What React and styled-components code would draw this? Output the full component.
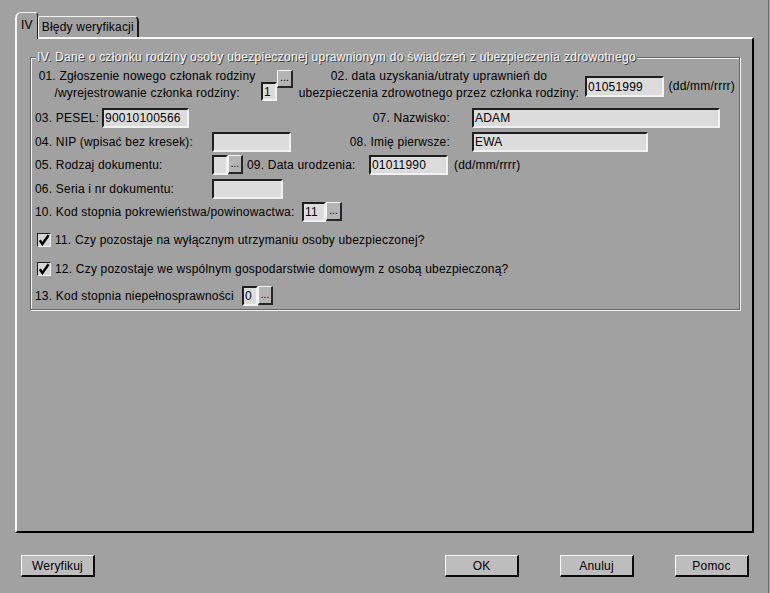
import React from 'react';
import styled, { createGlobalStyle } from 'styled-components';

const GlobalStyle = createGlobalStyle`
  html, body { margin: 0; padding: 0; background: #a1a1a1; }
  body {
    font-family: "Liberation Sans", Arial, Helvetica, sans-serif;
    font-size: 12px;
    color: #000;
  }
  * { box-sizing: border-box; }
`;

const Window = styled.div`
  width: 769px;
  height: 593px;
  background: #a1a1a1;
  border-right: 1px solid #6c6c6c;
  display: flex;
  flex-direction: column;
  letter-spacing: 0.2px;
  overflow: hidden;
`;

const TabBar = styled.div`
  display: flex;
  align-items: flex-end;
  height: 25px;
  margin-top: 12px;
  padding-left: 15px;
  position: relative;
  z-index: 1;
`;

const Tab = styled.div`
  display: flex;
  align-items: center;
  background: #a1a1a1;
  white-space: nowrap;
  height: ${p => (p.$active ? '27px' : '21px')};
  margin-bottom: ${p => (p.$active ? '-2px' : '0')};
  padding: ${p => (p.$active ? '0 4px 3px 4px' : '0 3px 0 3px')};
  border-style: solid;
  border-color: #f4f4f4 #1c1c1c transparent #f4f4f4;
  border-width: ${p => (p.$active ? '1px 1px 0 2px' : '1px 2px 0 1px')};
  border-radius: ${p => (p.$active ? '6px 3px 0 0' : '2px 5px 0 0')};
`;

const Panel = styled.div`
  margin-left: 15px;
  width: 739px;
  height: 496px;
  border-style: solid;
  border-width: 2px;
  border-color: #f8f8f8 #000 #000 #f8f8f8;
  padding: 12px 12px 0 13px;
`;

const Group = styled.fieldset`
  margin: 0;
  padding: 4px 4px 3px 4px;
  border: 1px solid #686868;
  box-shadow: inset 1px 1px 0 #f2f2f2, 1px 1px 0 #f2f2f2;
  min-width: 0;
  display: flex;
  flex-direction: column;
`;

const Legend = styled.legend`
  padding: 0 1px;
  margin-left: 1px;
  background: #a1a1a1;
  color: #f8f8f8;
  text-shadow: 1px 1px 0 #3c3c3c;
  letter-spacing: 0.3px;
  line-height: 13px;
  white-space: nowrap;
`;

const Row = styled.div`
  display: flex;
  align-items: ${p => p.$top ? 'flex-start' : 'center'};
  height: ${p => p.$h || 20}px;
  margin-top: ${p => p.$mt || 0}px;
  white-space: nowrap;
`;

const GridRow = styled.div`
  display: grid;
  grid-template-columns: 293px 100px 1fr;
  column-gap: 22px;
  align-items: center;
  height: 20px;
  margin-top: ${p => p.$mt || 0}px;
  white-space: nowrap;
`;

const Cell = styled.div`
  display: flex;
  align-items: center;
  justify-self: ${p => p.$end ? 'end' : 'start'};
`;

const CenterLabel = styled.div`
  width: ${p => p.$w}px;
  margin-left: ${p => p.$ml || 0}px;
  text-align: center;
  line-height: 17px;
`;

const Label = styled.span`
  display: inline-block;
  width: ${p => (p.$w ? `${p.$w}px` : 'auto')};
  margin-left: ${p => p.$ml || 0}px;
  margin-right: ${p => p.$mr || 0}px;
  margin-top: ${p => p.$mt || 0}px;
  line-height: 14px;
`;

const Field = styled.div`
  width: ${p => p.$w}px;
  height: ${p => p.$h || 20}px;
  margin-top: ${p => p.$mt || 0}px;
  margin-left: ${p => p.$ml || 0}px;
  background: #dcdcdc;
  border-style: solid;
  border-width: 2px;
  border-color: #1e1e1e #f2f2f2 #f2f2f2 #1e1e1e;
  padding: 0 0 0 1px;
  display: flex;
  align-items: center;
  line-height: 14px;
  overflow: hidden;
`;

const DotButton = styled.div`
  width: ${p => p.$w || 15}px;
  height: ${p => p.$h || 19}px;
  margin-top: ${p => p.$mt || 0}px;
  align-self: ${p => p.$self || 'auto'};
  background: #b4b4b4;
  border-style: solid;
  border-width: 1px 2px 2px 1px;
  border-color: #f6f6f6 #262626 #262626 #f6f6f6;
  display: flex;
  align-items: center;
  justify-content: center;
  font-size: 10px;
  letter-spacing: 0;
  padding-bottom: 2px;
`;

const CheckBox = styled.div`
  width: 14px;
  height: 14px;
  margin-left: 2px;
  margin-right: 4px;
  background: #d6d6d6;
  border-style: solid;
  border-width: 1px;
  border-color: #1e1e1e #f2f2f2 #f2f2f2 #1e1e1e;
  display: flex;
  align-items: center;
  justify-content: center;
`;

const Footer = styled.div`
  display: flex;
  align-items: center;
  margin-top: 22px;
  padding: 0 19px 0 21px;
`;

const Spacer = styled.div`
  flex: 1;
`;

const ButtonGroup = styled.div`
  display: flex;
  gap: 41px;
`;

const Button = styled.div`
  width: 74px;
  height: 22px;
  background: #bdbdbd;
  border-style: solid;
  border-width: 1px 2px 2px 1px;
  border-color: #f8f8f8 #0c0c0c #0c0c0c #f8f8f8;
  display: flex;
  align-items: center;
  justify-content: center;
  line-height: 14px;
`;

const Check = () => (
  <svg width="12" height="12" viewBox="0 0 12 12">
    <path d="M1.8 6.2 L4.4 10 L10.6 1.2" fill="none" stroke="#000" strokeWidth="2.4" />
  </svg>
);

export default function App() {
  return (
    <>
      <GlobalStyle />
      <Window>
        <TabBar>
          <Tab $active>IV</Tab>
          <Tab>Błędy weryfikacji</Tab>
        </TabBar>
        <Panel>
          <Group>
            <Legend>IV. Dane o członku rodziny osoby ubezpieczonej uprawnionym do świadczeń z ubezpieczenia zdrowotnego</Legend>

            <Row $top $h={34}>
              <CenterLabel $w={225}>
                01. Zgłoszenie nowego członak rodziny<br />/wyrejestrowanie członka rodziny:
              </CenterLabel>
              <Field $w={16} $h={19} $mt={14} $ml={2}>1</Field>
              <DotButton $w={16} $h={18} $mt={2}>...</DotButton>
              <CenterLabel $w={285} $ml={4}>
                02. data uzyskania/utraty uprawnień do<br />ubezpieczenia zdrowotnego przez członka rodziny:
              </CenterLabel>
              <Field $w={79} $h={21} $mt={8} $ml={4}>01051999</Field>
              <Label $ml={5} $mt={11}>(dd/mm/rrrr)</Label>
            </Row>

            <GridRow $mt={6}>
              <Cell>
                <Label $mr={3}>03. PESEL:</Label>
                <Field $w={87}>90010100566</Field>
              </Cell>
              <Cell $end><Label>07. Nazwisko:</Label></Cell>
              <Cell><Field $w={248}>ADAM</Field></Cell>
            </GridRow>

            <GridRow $mt={4}>
              <Cell>
                <Label $w={177}>04. NIP (wpisać bez kresek):</Label>
                <Field $w={79} />
              </Cell>
              <Cell $end><Label>08. Imię pierwsze:</Label></Cell>
              <Cell><Field $w={176}>EWA</Field></Cell>
            </GridRow>

            <Row $mt={3}>
              <Label $w={177}>05. Rodzaj dokumentu:</Label>
              <Field $w={16} />
              <DotButton $w={15} $self="flex-start">...</DotButton>
              <Label $ml={4} $w={122}>09. Data urodzenia:</Label>
              <Field $w={79}>01011990</Field>
              <Label $ml={6}>(dd/mm/rrrr)</Label>
            </Row>

            <Row $mt={4}>
              <Label $w={177}>06. Seria i nr dokumentu:</Label>
              <Field $w={71} />
            </Row>

            <Row $mt={3}>
              <Label $w={267}>10. Kod stopnia pokrewieństwa/powinowactwa:</Label>
              <Field $w={24}>11</Field>
              <DotButton $w={16} $self="flex-start">...</DotButton>
            </Row>

            <Row $mt={8}>
              <CheckBox><Check /></CheckBox>
              <Label>11. Czy pozostaje na wyłącznym utrzymaniu osoby ubezpieczonej?</Label>
            </Row>

            <Row $mt={9}>
              <CheckBox><Check /></CheckBox>
              <Label>12. Czy pozostaje we wspólnym gospodarstwie domowym z osobą ubezpieczoną?</Label>
            </Row>

            <Row $mt={7}>
              <Label $w={207}>13. Kod stopnia niepełnosprawności</Label>
              <Field $w={16}>0</Field>
              <DotButton $w={15} $self="flex-start">...</DotButton>
            </Row>
          </Group>
        </Panel>
        <Footer>
          <Button>Weryfikuj</Button>
          <Spacer />
          <ButtonGroup>
            <Button>OK</Button>
            <Button>Anuluj</Button>
            <Button>Pomoc</Button>
          </ButtonGroup>
        </Footer>
      </Window>
    </>
  );
}
